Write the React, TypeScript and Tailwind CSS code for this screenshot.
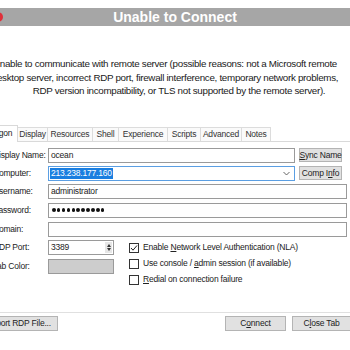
import React from 'react'

const Field = ({ label, children }: { label: string; children: React.ReactNode }) => (
    <div className="flex items-center h-[15px]">
        <span className="w-[55px] shrink-0 whitespace-nowrap">{label}</span>
        {children}
    </div>
)

const Btn = ({ children, className }: { children: React.ReactNode; className: string }) => (
    <div
        className={`flex items-center justify-center shrink-0 bg-[#e1e1e1] border border-[#b4b4b4] whitespace-nowrap ${className}`}
    >
        {children}
    </div>
)

const Check = ({ checked, children }: { checked?: boolean; children: React.ReactNode }) => (
    <div className="flex items-center h-[10px] whitespace-nowrap">
        <div className="w-[10px] h-[10px] border border-[#333] bg-white shrink-0 flex items-center justify-center">
            {checked && (
                <svg width="8" height="8" viewBox="0 0 8 8">
                    <polyline points="1,4 3,6.2 7,1.5" fill="none" stroke="#222" strokeWidth="1" />
                </svg>
            )}
        </div>
        <span className="ml-[4px]">{children}</span>
    </div>
)

const tabs = [
    { name: 'Logon', w: 'w-[34px]' },
    { name: 'Display', w: 'w-[30px]' },
    { name: 'Resources', w: 'w-[45px]' },
    { name: 'Shell', w: 'w-[26px]' },
    { name: 'Experience', w: 'w-[49px]' },
    { name: 'Scripts', w: 'w-[33px]' },
    { name: 'Advanced', w: 'w-[41px]' },
    { name: 'Notes', w: 'w-[29px]' },
]

export default function App() {
    return (
        <div className="w-[350px] h-[350px] overflow-hidden bg-white flex flex-col font-['Liberation_Sans',Arial,sans-serif] text-[8.5px] tracking-[-0.2px] text-[#222]">
            <div className="h-[8px] shrink-0" />
            {/* title bar */}
            <div className="relative h-[18px] shrink-0 bg-[#a6a6a6] flex items-center justify-center">
                <div className="absolute left-[-7px] top-[4px] w-[10px] h-[10px] rounded-full bg-[#e0303a]" />
                <span className="text-white font-bold text-[14px] tracking-normal">Unable to Connect</span>
            </div>

            {/* message */}
            <div className="mt-[31px] w-[400px] -ml-[35px] shrink-0 text-center text-[9.8px] leading-[13.5px] tracking-[-0.3px] text-[#1a1a1a]">
                <div>Unable to communicate with remote server (possible reasons: not a Microsoft remote</div>
                <div>desktop server, incorrect RDP port, firewall interference, temporary network problems,</div>
                <div className="pl-[28px]">RDP version incompatibility, or TLS not supported by the remote server).</div>
            </div>

            {/* tabs */}
            <div className="mt-[27px] -ml-[16px] w-[400px] h-[17px] shrink-0 flex items-end border-b border-[#d9d9d9]">
                {tabs.map((t, i) =>
                    i === 0 ? (
                        <div
                            key={t.name}
                            className={`${t.w} h-[17px] -mb-px flex items-center justify-center bg-white border border-b-0 border-[#d9d9d9]`}
                        >
                            {t.name}
                        </div>
                    ) : (
                        <div
                            key={t.name}
                            className={`${t.w} h-[14px] flex items-center justify-center bg-[#fafafa] border border-l-0 border-b-0 border-[#dcdcdc] text-[#333]`}
                        >
                            {t.name}
                        </div>
                    )
                )}
            </div>

            {/* form */}
            <div className="mt-[6px] -ml-[7px] w-[360px] shrink-0 flex flex-col">
                <Field label="Display Name:">
                    <div className="w-[247px] h-[15px] border border-[#9a9a9a] flex items-center px-[2px]">ocean</div>
                    <Btn className="ml-[4px] w-[43px] h-[14px]">
                        <span>
                            <u>S</u>ync Name
                        </span>
                    </Btn>
                </Field>
                <div className="mt-[3px]">
                    <Field label="Computer:">
                        <div className="w-[247px] h-[15px] border border-[#5b9fe3] flex items-center px-[1px]">
                            <span className="bg-[#1a7ee0] text-white px-[1px] leading-[11px]">213.238.177.160</span>
                            <svg className="ml-auto mr-[3px]" width="7" height="5" viewBox="0 0 7 5">
                                <polyline points="0.5,1 3.5,4 6.5,1" fill="none" stroke="#555" strokeWidth="0.9" />
                            </svg>
                        </div>
                        <Btn className="ml-[4px] w-[43px] h-[14px]">
                            <span>
                                Comp I<u>n</u>fo
                            </span>
                        </Btn>
                    </Field>
                </div>
                <div className="mt-[3px]">
                    <Field label="Username:">
                        <div className="w-[299px] h-[15px] border border-[#9a9a9a] flex items-center px-[2px]">administrator</div>
                    </Field>
                </div>
                <div className="mt-[4px]">
                    <Field label="Password:">
                        <div className="w-[299px] h-[15px] border border-[#9a9a9a] flex items-center gap-[1.4px] px-[3px]">
                            {Array.from({ length: 11 }).map((_, i) => (
                                <span key={i} className="w-[3.5px] h-[3.5px] rounded-full bg-[#111]" />
                            ))}
                        </div>
                    </Field>
                </div>
                <div className="mt-[4px]">
                    <Field label="Domain:">
                        <div className="w-[299px] h-[15px] border border-[#9a9a9a]" />
                    </Field>
                </div>

                <div className="mt-[3px] h-[34px] flex items-start">
                    <div className="w-[121px] shrink-0 flex flex-col">
                        <Field label="RDP Port:">
                            <div className="w-[66px] h-[15px] border border-[#9a9a9a] flex items-center pl-[2px]">
                                <span>3389</span>
                                <div className="ml-auto mr-[1px] w-[7px] h-[11px] bg-[#e6e6e6] flex flex-col items-center justify-center gap-[1px]">
                                    <div className="w-0 h-0 border-l-[2.5px] border-r-[2.5px] border-b-[3px] border-l-transparent border-r-transparent border-b-[#333]" />
                                    <div className="w-0 h-0 border-l-[2.5px] border-r-[2.5px] border-t-[3px] border-l-transparent border-r-transparent border-t-[#333]" />
                                </div>
                            </div>
                        </Field>
                        <div className="mt-[4px]">
                            <Field label="Tab Color:">
                                <div className="w-[66px] h-[15px] border border-[#9a9a9a] bg-[#cdcdcd]" />
                            </Field>
                        </div>
                    </div>
                    <div className="ml-[15px] mt-[3px] flex flex-col gap-[6px]">
                        <Check checked>
                            Enable <u>N</u>etwork Level Authentication (NLA)
                        </Check>
                        <Check>
                            Use console / <u>a</u>dmin session (if available)
                        </Check>
                        <Check>
                            <u>R</u>edial on connection failure
                        </Check>
                    </div>
                </div>
            </div>

            {/* separator */}
            <div className="mt-[38px] h-px shrink-0 bg-[#e0e0e0]" />

            {/* buttons */}
            <div className="mt-[3px] -ml-[20px] w-[371px] shrink-0 flex">
                <Btn className="w-[78px] h-[15px]">
                    <span>
                        <u>I</u>mport RDP File...
                    </span>
                </Btn>
                <Btn className="ml-auto w-[61px] h-[15px]">
                    <span>
                        C<u>o</u>nnect
                    </span>
                </Btn>
                <Btn className="ml-[6px] w-[59px] h-[15px]">
                    <span>
                        C<u>l</u>ose Tab
                    </span>
                </Btn>
            </div>
        </div>
    )
}
